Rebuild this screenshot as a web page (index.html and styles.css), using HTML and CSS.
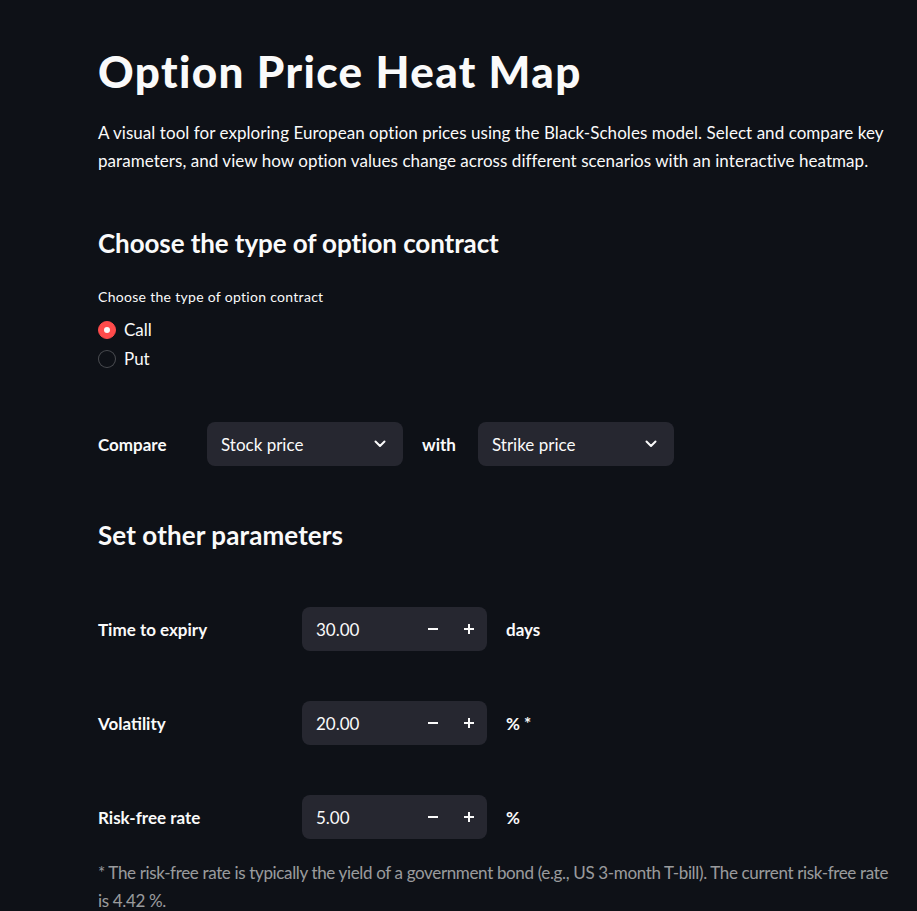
FILE: index.html
```html
<!DOCTYPE html>
<html lang="en">
<head>
<meta charset="utf-8">
<title>Option Price Heat Map</title>
<link rel="stylesheet" href="styles.css">
</head>
<body>
<main class="page">
  <h1 class="title">Option Price Heat Map</h1>
  <p class="intro">A visual tool for exploring European option prices using the Black-Scholes model. Select and compare key<br>parameters, and view how option values change across different scenarios with an interactive heatmap.</p>

  <h3 class="section">Choose the type of option contract</h3>
  <div class="radio-group">
    <div class="widget-label">Choose the type of option contract</div>
    <label class="radio"><span class="dot checked"></span><span>Call</span></label>
    <label class="radio"><span class="dot"></span><span>Put</span></label>
  </div>

  <div class="compare-row">
    <div class="compare-label strong">Compare</div>
    <div class="select"><span>Stock price</span>
      <svg class="chev" width="12" height="8" viewBox="0 0 12 8"><polyline points="1.5,1.5 6,6 10.5,1.5" fill="none" stroke="#fafafa" stroke-width="2" stroke-linecap="round" stroke-linejoin="round"/></svg>
    </div>
    <div class="with-label strong">with</div>
    <div class="select"><span>Strike price</span>
      <svg class="chev" width="12" height="8" viewBox="0 0 12 8"><polyline points="1.5,1.5 6,6 10.5,1.5" fill="none" stroke="#fafafa" stroke-width="2" stroke-linecap="round" stroke-linejoin="round"/></svg>
    </div>
  </div>

  <h3 class="section section-2">Set other parameters</h3>

  <div class="params">
    <div class="param-row">
      <div class="param-label strong">Time to expiry</div>
      <div class="number"><span class="value">30.00</span>
        <span class="step"><svg width="10" height="10" viewBox="0 0 10 10"><rect x="0" y="4" width="10" height="2" fill="#fafafa"/></svg></span>
        <span class="step"><svg width="10" height="10" viewBox="0 0 10 10"><rect x="0" y="4" width="10" height="2" fill="#fafafa"/><rect x="4" y="0" width="2" height="10" fill="#fafafa"/></svg></span>
      </div>
      <div class="unit strong">days</div>
    </div>
    <div class="param-row">
      <div class="param-label strong">Volatility</div>
      <div class="number"><span class="value">20.00</span>
        <span class="step"><svg width="10" height="10" viewBox="0 0 10 10"><rect x="0" y="4" width="10" height="2" fill="#fafafa"/></svg></span>
        <span class="step"><svg width="10" height="10" viewBox="0 0 10 10"><rect x="0" y="4" width="10" height="2" fill="#fafafa"/><rect x="4" y="0" width="2" height="10" fill="#fafafa"/></svg></span>
      </div>
      <div class="unit strong">% *</div>
    </div>
    <div class="param-row">
      <div class="param-label strong">Risk-free rate</div>
      <div class="number"><span class="value">5.00</span>
        <span class="step"><svg width="10" height="10" viewBox="0 0 10 10"><rect x="0" y="4" width="10" height="2" fill="#fafafa"/></svg></span>
        <span class="step"><svg width="10" height="10" viewBox="0 0 10 10"><rect x="0" y="4" width="10" height="2" fill="#fafafa"/><rect x="4" y="0" width="2" height="10" fill="#fafafa"/></svg></span>
      </div>
      <div class="unit strong">%</div>
    </div>
  </div>

  <p class="footnote">* The risk-free rate is typically the yield of a government bond (e.g., US 3-month T-bill). The current risk-free rate<br>is 4.42 %.</p>
</main>
</body>
</html>
```
FILE: styles.css
```css
html, body {
  margin: 0;
  padding: 0;
  background: #0e1117;
}
body {
  color: #fafafa;
  font-family: Lato, "Noto Sans", sans-serif;
  font-size: 17px;
  overflow: hidden;
  height: 911px;
}
.page {
  margin-left: 98px;
  width: 815px;
  display: flex;
  flex-direction: column;
}
.title {
  margin: 44px 0 0 0;
  font-size: 44px;
  line-height: 54px;
  font-weight: 900;
  letter-spacing: 1.4px;
}
.intro {
  margin: 21px 0 0 0;
  font-size: 17px;
  line-height: 28px;
  letter-spacing: 0.05px;
  white-space: nowrap;
}
.section {
  margin: 51px 0 0 0;
  font-size: 26px;
  line-height: 34px;
  font-weight: 700;
  letter-spacing: -0.1px;
}
.radio-group {
  margin-top: 27px;
  display: flex;
  flex-direction: column;
}
.widget-label {
  font-size: 14px;
  line-height: 20px;
  margin-bottom: 8px;
  letter-spacing: 0.3px;
}
.radio {
  display: flex;
  align-items: center;
  gap: 8px;
  height: 29px;
  font-size: 17px;
}
.dot {
  width: 18px;
  height: 18px;
  border-radius: 50%;
  box-sizing: border-box;
  border: 1px solid rgba(250, 250, 250, 0.25);
  background: #0e1117;
  display: flex;
  align-items: center;
  justify-content: center;
}
.dot.checked {
  background: #ff4b4b;
  border-color: #ff4b4b;
}
.dot.checked::after {
  content: "";
  width: 6px;
  height: 6px;
  border-radius: 50%;
  background: #fafafa;
}
.strong {
  font-weight: 700;
  font-size: 17px;
}
.compare-row {
  margin-top: 49px;
  display: flex;
  align-items: center;
}
.compare-label {
  width: 109px;
}
.select {
  width: 196px;
  height: 44px;
  box-sizing: border-box;
  background: #262730;
  border-radius: 8px;
  display: flex;
  align-items: center;
  justify-content: space-between;
  padding: 0 17px 0 14px;
  font-size: 17px;
}
.with-label {
  padding-left: 19px;
  box-sizing: border-box;
  width: 75px;
}
.section-2 {
  margin-top: 52px;
  letter-spacing: 0.1px;
}
.params {
  margin-top: 55px;
  display: flex;
  flex-direction: column;
  gap: 50px;
}
.param-row {
  display: flex;
  align-items: center;
  height: 44px;
}
.param-label {
  width: 204px;
}
.number {
  width: 185px;
  height: 44px;
  box-sizing: border-box;
  background: #262730;
  border-radius: 8px;
  display: flex;
  align-items: center;
  padding-left: 14px;
  font-size: 17px;
}
.number .value {
  flex: 1;
}
.step {
  width: 36px;
  height: 44px;
  display: flex;
  align-items: center;
  justify-content: center;
}
.unit {
  margin-left: 19px;
}
.footnote {
  margin: 20px 0 0 0;
  font-size: 17px;
  line-height: 28px;
  color: rgba(250, 250, 250, 0.6);
  letter-spacing: -0.35px;
  white-space: nowrap;
}
```
